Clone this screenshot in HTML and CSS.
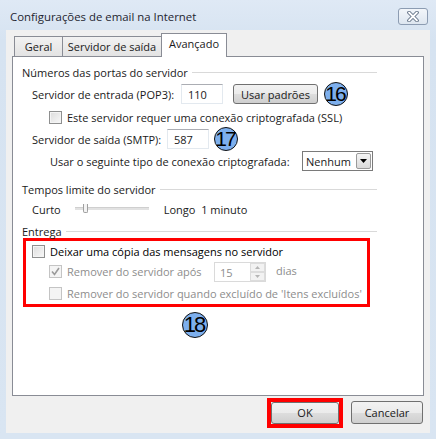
FILE: index.html
```html
<!DOCTYPE html>
<html lang="pt">
<head>
    <meta charset="UTF-8">
    <title>Configurações de email na Internet</title>
    <link rel="stylesheet" href="styles.css">
</head>
<body>
    <div class="window">
        <div class="titlebar">
            <span class="title">Configurações de email na Internet</span>
            <button class="close-btn" aria-label="Fechar">
                <svg width="14" height="11" viewBox="0 0 14 11">
                    <path d="M3 1.5 L11 9.5 M11 1.5 L3 9.5" stroke="#5b6b80" stroke-width="3.6" stroke-linecap="round"/>
                    <path d="M3 1.5 L11 9.5 M11 1.5 L3 9.5" stroke="#fff" stroke-width="1.8" stroke-linecap="round"/>
                </svg>
            </button>
        </div>
        <div class="dialog">
            <div class="tabs">
                <div class="tab tab-general">Geral</div>
                <div class="tab tab-outgoing">Servidor de saída</div>
                <div class="tab active">Avançado</div>
            </div>
            <div class="panel">
                <div class="group-title"><span>Números das portas do servidor</span><i></i></div>

                <div class="row row-pop">
                    <span class="lbl">Servidor de entrada (POP3):</span>
                    <span class="field w-port">110</span>
                    <button class="btn btn-defaults">Usar padrões</button>
                    <span class="marker">16</span>
                </div>
                <div class="row row-ssl">
                    <span class="check"></span>
                    <span>Este servidor requer uma conexão criptografada (SSL)</span>
                </div>
                <div class="row row-smtp">
                    <span class="lbl">Servidor de saída (SMTP):</span>
                    <span class="field w-port">587</span>
                    <span class="marker">17</span>
                </div>
                <div class="row row-enc">
                    <span class="lbl">Usar o seguinte tipo de conexão criptografada:</span>
                    <span class="select">
                        <span class="select-text">Nenhum</span>
                        <span class="select-arrow">
                            <svg width="7" height="4" viewBox="0 0 7 4"><path d="M0 0 H7 L3.5 4 Z" fill="#000"/></svg>
                        </span>
                    </span>
                </div>

                <div class="group-title gt-2"><span>Tempos limite do servidor</span><i></i></div>
                <div class="row row-slider">
                    <span>Curto</span>
                    <span class="slider"><span class="track"></span><span class="thumb"></span></span>
                    <span>Longo&nbsp;&nbsp;1 minuto</span>
                </div>

                <div class="group-title gt-3"><span>Entrega</span><i></i></div>
                <div class="highlight">
                    <div class="row row-keep">
                        <span class="check"></span>
                        <span>Deixar uma cópia das mensagens no servidor</span>
                    </div>
                    <div class="row row-sub disabled">
                        <span class="check checked">
                            <svg width="9" height="9" viewBox="0 0 9 9"><path d="M1 4.5 L3.5 7.5 L8 1" fill="none" stroke="#9a9a9a" stroke-width="1.6"/></svg>
                        </span>
                        <span class="lbl">Remover do servidor após</span>
                        <span class="spin">
                            <span class="spin-text">15</span>
                            <span class="spin-btns">
                                <span><svg width="5" height="3" viewBox="0 0 5 3"><path d="M0 3 L2.5 0 L5 3 Z" fill="#b5b5b5"/></svg></span>
                                <span><svg width="5" height="3" viewBox="0 0 5 3"><path d="M0 0 L2.5 3 L5 0 Z" fill="#b5b5b5"/></svg></span>
                            </span>
                        </span>
                        <span class="days">dias</span>
                    </div>
                    <div class="row row-sub2 disabled">
                        <span class="check"></span>
                        <span>Remover do servidor quando excluído de 'Itens excluídos'</span>
                    </div>
                </div>
                <div class="marker marker-18">18</div>
            </div>
            <div class="actions">
                <span class="ok-frame"><button class="btn btn-ok">OK</button></span>
                <button class="btn btn-cancel">Cancelar</button>
            </div>
        </div>
    </div>
</body>
</html>
```

FILE: styles.css
```css
html, body {
    margin: 0;
    padding: 0;
}
body {
    width: 436px;
    height: 439px;
    overflow: hidden;
    font-family: "Open Sans", "Noto Sans", sans-serif;
    font-size: 11px;
    color: #1a1a1a;
    background: #d9e5f2;
}
.window {
    height: 439px;
    background: linear-gradient(#dfe9f5, #d6e3f1 40px, #d9e5f2);
    box-sizing: border-box;
}
.titlebar {
    height: 30px;
    display: flex;
    align-items: center;
    justify-content: space-between;
    padding: 0 8px 0 10px;
}
.title {
    font-size: 11.4px;
    color: #1e2530;
    margin-top: 2px;
}
.close-btn {
    width: 30px;
    height: 17px;
    margin-top: 2px;
    padding: 0;
    border: 1px solid #8c9cb2;
    border-radius: 3px;
    background: linear-gradient(#f3f6fa, #dde6f0);
    display: flex;
    align-items: center;
    justify-content: center;
}
.dialog {
    margin: 0 6px;
    height: 403px;
    background: #f0f0f0;
    padding: 3px 6px 0 6px;
    box-sizing: border-box;
}
.tabs {
    display: flex;
    align-items: flex-end;
    height: 23px;
    padding-left: 2px;
}
.tab {
    height: 19px;
    line-height: 19px;
    box-sizing: content-box;
    text-align: center;
    border: 1px solid #898c95;
    border-bottom: none;
    background: linear-gradient(#f2f2f2, #e3e3e3);
    margin-right: -1px;
}
.tab-general {
    width: 47px;
}
.tab-outgoing {
    width: 98px;
}
.tab.active {
    width: 64px;
    height: 23px;
    line-height: 20px;
    background: #fff;
    position: relative;
    z-index: 1;
    margin-bottom: -1px;
}
.panel {
    height: 340px;
    background: #fff;
    border: 1px solid #898c95;
    box-sizing: border-box;
    padding: 5px 46px 0 9px;
}
.group-title {
    display: flex;
    align-items: center;
    height: 20px;
}
.group-title i {
    flex: 1;
    height: 0;
    border-top: 1px solid #d9d9d9;
    margin-left: 4px;
    margin-top: 1px;
}
.row {
    display: flex;
    align-items: center;
    white-space: nowrap;
}
.row-pop {
    height: 24px;
    padding-left: 10px;
}
.row-pop .lbl {
    width: 149px;
}
.field {
    height: 20px;
    line-height: 19px;
    box-sizing: border-box;
    border: 1px solid #e3e9ef;
    border-top-color: #abadb3;
    padding-left: 6px;
    background: #fff;
}
.w-port {
    width: 42px;
}
.btn {
    font-family: inherit;
    font-size: 11px;
    color: #1a1a1a;
    border: 1px solid #707070;
    border-radius: 3px;
    background: linear-gradient(#f2f2f2 0%, #ebebeb 50%, #dddddd 51%, #cfcfcf 100%);
    padding: 0;
}
.btn-defaults {
    width: 85px;
    height: 20px;
    margin-left: 10px;
}
.marker {
    width: 22px;
    height: 22px;
    border: 1.5px solid #111;
    border-radius: 50%;
    background: #7dafed;
    display: flex;
    align-items: center;
    justify-content: center;
    font-family: "Liberation Sans", Arial, sans-serif;
    font-size: 21px;
    letter-spacing: -2px;
    color: #000;
    text-indent: -2px;
    flex-shrink: 0;
}
.row-pop .marker {
    margin-left: 6px;
}
.row-ssl {
    height: 23px;
    padding-left: 27px;
}
.check {
    width: 11px;
    height: 11px;
    border: 1px solid #8e8f8f;
    background: linear-gradient(135deg, #dcdcdc, #f8f8f8);
    box-shadow: inset 0 0 0 1px #f4f4f4;
    margin-right: 5px;
    display: flex;
    align-items: center;
    justify-content: center;
    flex-shrink: 0;
}
.row-smtp {
    height: 20px;
    padding-left: 10px;
}
.row-smtp .lbl {
    width: 135px;
}
.row-smtp .marker {
    margin-left: 5px;
}
.row-enc {
    height: 24px;
    padding-left: 28px;
}
.row-enc .lbl {
    width: 252px;
}
.select {
    width: 71px;
    height: 20px;
    box-sizing: border-box;
    border: 1px solid #7a7a7a;
    background: #fff;
    display: flex;
    align-items: center;
    padding: 0 1px 0 3px;
}
.select-text {
    flex: 1;
}
.select-arrow {
    width: 15px;
    height: 16px;
    box-sizing: border-box;
    border: 1px solid #9a9a9a;
    border-radius: 2px;
    background: linear-gradient(#f4f4f4, #dadada);
    display: flex;
    align-items: center;
    justify-content: center;
}
.gt-2 {
    margin-top: 6px;
}
.row-slider {
    height: 20px;
    padding-left: 10px;
}
.slider {
    position: relative;
    width: 74px;
    height: 14px;
    margin: 0 15px 0 14px;
}
.track {
    position: absolute;
    left: 0;
    right: 0;
    top: 5px;
    height: 2px;
    background: #e2e2e2;
    border-top: 1px solid #cfcfcf;
}
.thumb {
    position: absolute;
    left: 8px;
    top: 2px;
    width: 3px;
    height: 8px;
    border: 1px solid #a0a0a0;
    border-top: none;
    border-radius: 0 0 2px 2px;
    background: #f4f4f4;
}
.gt-3 {
    height: 14px;
    margin-top: 5px;
}
.highlight {
    width: 347px;
    height: 69px;
    box-sizing: border-box;
    border: 3px solid #ff0000;
    margin-left: 1px;
    padding-left: 6px;
}
.row-keep {
    height: 20px;
    color: #000;
}
.disabled {
    color: #8d8d8d;
}
.row-sub {
    height: 21px;
    padding-left: 17px;
}
.row-sub .lbl {
    width: 147px;
}
.check.checked {
    background: #f4f4f4;
}
.disabled .check {
    border-color: #c4c4c4;
    background: #f4f4f4;
}
.spin {
    width: 52px;
    height: 20px;
    box-sizing: border-box;
    border: 1px solid #dadada;
    display: flex;
    background: #fff;
}
.spin-text {
    flex: 1;
    padding-left: 5px;
    line-height: 19px;
}
.spin-btns {
    width: 15px;
    display: flex;
    flex-direction: column;
}
.spin-btns span {
    flex: 1;
    border: 1px solid #dcdcdc;
    background: #f2f2f2;
    display: flex;
    align-items: center;
    justify-content: center;
}
.days {
    margin-left: 10px;
    margin-top: -3px;
}
.row-sub2 {
    height: 22px;
    padding-left: 17px;
}
.marker-18 {
    width: 24px;
    height: 24px;
    margin: 5px 0 0 160px;
    font-size: 22px;
}
.actions {
    display: flex;
    justify-content: flex-end;
    align-items: center;
    height: 33px;
    padding-right: 1px;
}
.ok-frame {
    border: 4px solid #ff0000;
    display: flex;
    margin-right: 8px;
}
.btn-ok {
    width: 68px;
    height: 22px;
}
.btn-cancel {
    width: 72px;
    height: 23px;
}
```
